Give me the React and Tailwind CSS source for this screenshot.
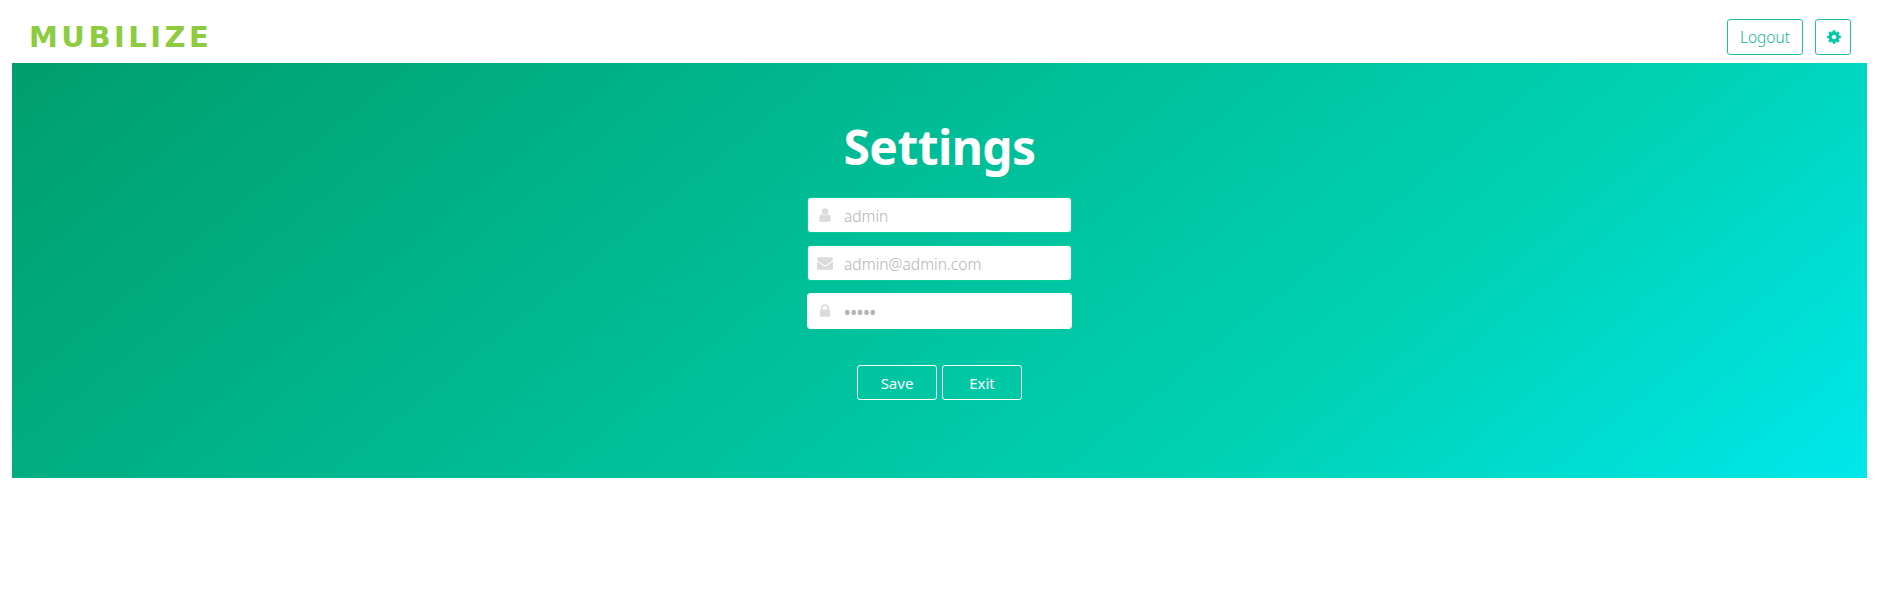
const icons = {
  user: "M1536 1399q0 109-62.5 187t-150.5 78h-854q-88 0-150.5-78t-62.5-187q0-85 8.5-160.5t31.5-152 58.5-131 94-89 134.5-34.5q131 128 313 128t313-128q76 0 134.5 34.5t94 89 58.5 131 31.5 152 8.5 160.5zm-256-887q0 159-112.5 271.5t-271.5 112.5-271.5-112.5-112.5-271.5 112.5-271.5 271.5-112.5 271.5 112.5 112.5 271.5z",
  envelope: "M1792 710v794q0 66-47 113t-113 47h-1472q-66 0-113-47t-47-113v-794q44 49 101 87 362 246 497 345 57 42 92.5 65.5t94.5 48 110 24.5h2q51 0 110-24.5t94.5-48 92.5-65.5q170-123 498-345 57-39 100-87zm0-294q0 79-49 151t-122 123q-376 261-468 325-10 7-42.5 31t-54 38.5-52 32.5-57.5 27-50 9h-2q-23 0-50-9t-57.5-27-52-32.5-54-38.5-42.5-31q-91-64-262-182.5t-205-142.5q-62-42-117-115.5t-55-136.5q0-78 41.5-130t118.5-52h1472q65 0 112.5 47t47.5 113z",
  lock: "M640 768h512v-192q0-106-75-181t-181-75-181 75-75 181v192zm832 96v576q0 40-28 68t-68 28h-960q-40 0-68-28t-28-68v-576q0-40 28-68t68-28h32v-192q0-184 132-316t316-132 316 132 132 316v192h32q40 0 68 28t28 68z",
  cog: "M1152 896q0-106-75-181t-181-75-181 75-75 181 75 181 181 75 181-75 75-181zm512-109v222q0 12-8 23t-20 13l-185 28q-19 54-39 91 35 50 107 138 10 12 10 25t-9 23q-27 37-99 108t-94 71q-12 0-26-9l-138-108q-44 23-91 38-16 136-29 186-7 28-36 28h-222q-14 0-24.5-8.5t-11.5-21.5l-28-184q-49-16-90-37l-141 107q-10 9-25 9-14 0-25-11-126-114-165-168-7-10-7-23 0-12 8-23 15-21 51-66.5t54-70.5q-27-50-41-99l-183-27q-13-2-21-12.5t-8-23.5v-222q0-12 8-23t19-13l186-28q14-46 39-92-40-57-107-138-10-12-10-24 0-10 9-23 26-36 98.5-107.5t94.5-71.5q13 0 26 10l138 107q44-23 91-38 16-136 29-186 7-28 36-28h222q14 0 24.5 8.5t11.5 21.5l28 184q49 16 90 37l142-107q9-9 24-9 13 0 25 10 129 119 165 170 7 8 7 22 0 12-8 23-15 21-51 66.5t-54 70.5q26 50 41 98l183 28q13 2 21 12.5t8 23.5z",
};

function Icon({ name }) {
  return (
    <svg viewBox="0 0 1792 1792" className="size-4 shrink-0" fill="currentColor" aria-hidden="true">
      <path d={icons[name]} />
    </svg>
  );
}

function Field({ icon, type, placeholder, border, text }) {
  return (
    <label className={`flex h-9 items-center rounded-[3px] border bg-white bg-clip-padding ${border}`}>
      <span className="flex w-[34px] justify-center text-[#dbdbdb]">
        <Icon name={icon} />
      </span>
      <input
        type={type}
        placeholder={placeholder}
        className={`h-full min-w-0 flex-1 bg-transparent pt-[2px] pr-2 pl-[2px] text-[#363636] outline-none placeholder:text-[#b4b4b4] ${text}`}
      />
    </label>
  );
}

export default function App() {
  return (
    <div className="flex min-h-[604px] flex-col bg-white pr-[21px] pl-3 font-['Noto_Sans',sans-serif]">
      <header className="flex h-[63px] items-start justify-between pr-4 pl-[16px]">
        <div className="pt-[20px] pl-px font-['DejaVu_Sans',sans-serif] text-[29px] leading-[35px] font-bold tracking-[3.5px] text-[#8dcb3f]">
          MUBILIZE
        </div>
        <div className="flex gap-3 pt-[19px]">
          <button className="h-9 w-[76px] rounded-[3px] border border-[#1fbfa3] pt-[2px] text-[15.5px] font-light text-[#12b497]">
            Logout
          </button>
          <button aria-label="Settings" className="flex size-9 items-center justify-center rounded-[3px] border border-[#1fbfa3] pl-px text-[#00c9a7]">
            <Icon name="cog" />
          </button>
        </div>
      </header>
      <main className="flex h-[415px] flex-col items-center bg-[linear-gradient(141deg,#009e6c_0%,#00d1b2_71%,#00e7eb_100%)] pt-[57px]">
        <h1 className="text-[48px] leading-[54px] font-bold tracking-[-0.6px] text-white">Settings</h1>
        <form className="mt-[23px] flex w-[265px] flex-col gap-3">
          <Field icon="user" type="text" placeholder="admin" border="border-[#0dcb98]" text="text-[15.5px] font-light" />
          <Field icon="envelope" type="email" placeholder="admin@admin.com" border="border-[#0dcb98]" text="text-[15.6px] font-light" />
          <Field icon="lock" type="password" placeholder="•••••" border="border-white" text="text-[17px] font-semibold" />
        </form>
        <div className="mt-9 flex gap-[5px] text-[15px] text-white">
          <button className="h-[35px] w-20 rounded-[3px] border border-white pt-px">Save</button>
          <button className="h-[35px] w-20 rounded-[3px] border border-white pt-px">Exit</button>
        </div>
      </main>
    </div>
  );
}
